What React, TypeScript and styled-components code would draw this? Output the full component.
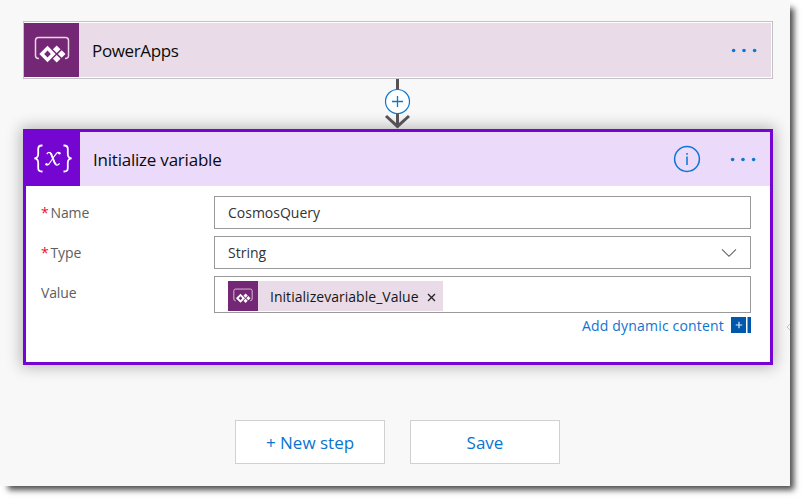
import React from "react";
import styled, { createGlobalStyle } from "styled-components";

const Global = createGlobalStyle`
  * { box-sizing: border-box; }
  body { margin: 0; background: #fff; font-family: "Open Sans", "Noto Sans", sans-serif; }
  button { font-family: inherit; padding: 0; }
`;

const Page = styled.div`
  width: 805px;
  height: 501px;
  overflow: hidden;
  background: #fff;
`;

const Canvas = styled.main`
  position: relative;
  width: 790px;
  height: 486px;
  padding: 21px 17px 0 23px;
  background: #f8f8f8;
  box-shadow: 6px 6px 6px -2px rgba(0, 0, 0, 0.7);
`;

const EdgeMark = styled.svg`
  position: absolute;
  right: 0;
  top: 323px;
`;

const TriggerCard = styled.section`
  width: 750px;
  height: 58px;
  padding: 1px;
  border: 1px solid #c3c2c3;
  background: #fff;
  display: flex;
  > :first-child { margin: 0 0 0 -1px; }
`;

const IconTile = styled.div<{ $color: string; $size: number }>`
  flex: none;
  width: ${(p) => p.$size}px;
  height: 100%;
  background: ${(p) => p.$color};
  display: flex;
  align-items: center;
  justify-content: center;
`;

const CardBar = styled.header<{ $color: string; $pad: number }>`
  flex: 1;
  height: 100%;
  padding: 0 ${(p) => p.$pad}px 0 13px;
  background: ${(p) => p.$color};
  display: flex;
  align-items: center;
`;

const Title = styled.h2<{ $spacing: number }>`
  margin: 0;
  padding-top: 2px;
  flex: 1;
  font-size: 17px;
  font-weight: 400;
  line-height: 24px;
  letter-spacing: ${(p) => p.$spacing}px;
  color: #0b0b0b;
  white-space: nowrap;
`;

const IconButton = styled.button`
  display: flex;
  border: 0;
  background: none;
`;

const Connector = styled.div`
  height: 50px;
  width: 748px;
  display: flex;
  justify-content: center;
  position: relative;
  z-index: 1;
`;

const ActionCard = styled.section`
  width: 750px;
  height: 236px;
  border: 3px solid #7506d2;
  background: #fff;
  box-shadow: 0 0 14px 2px rgba(0, 0, 0, 0.27);
`;

const ActionHead = styled.div`
  display: flex;
  height: 54px;
  > :nth-child(2) > :nth-child(2) { margin-right: 29px; }
`;

const Form = styled.div`
  padding: 10px 19px 0 15px;
  display: flex;
  flex-direction: column;
  gap: 7px;
`;

const Row = styled.div<{ $height: number }>`
  display: flex;
  height: ${(p) => p.$height}px;
`;

const Label = styled.label`
  width: 173px;
  font-size: 14px;
  line-height: 33px;
  letter-spacing: -0.15px;
  color: #605e5c;
`;

const Required = styled.span`
  color: #e8112d;
  margin-right: 2px;
`;

const Field = styled.div`
  flex: 1;
  border: 1px solid #999;
  padding: 0 13px;
  display: flex;
  align-items: center;
  justify-content: space-between;
  font-size: 14px;
  color: #333;
  letter-spacing: 0;
`;

const Token = styled.div`
  display: flex;
  align-items: center;
  height: 30px;
  width: 215px;
  margin-top: 2px;
  background: #e9dce8;
  color: #161616;
  white-space: nowrap;
`;

const TokenText = styled.span`
  margin-left: 12px;
  padding-top: 1px;
  width: 157px;
  letter-spacing: 0.03px;
`;

const Dynamic = styled.div`
  height: 20px;
  margin-top: -5px;
  display: flex;
  align-items: center;
  justify-content: flex-end;
  gap: 7px;
  color: #0f74cf;
  font-size: 14px;
  line-height: 20px;
`;

const DynamicText = styled.span`
  padding-top: 1px;
  letter-spacing: 0.18px;
`;

const Actions = styled.footer`
  display: flex;
  gap: 25px;
  margin: 55px 0 0 212px;
`;

const ActionButton = styled.button`
  width: 150px;
  height: 44px;
  border: 1px solid #d2d1d0;
  background: #fff;
  color: #0874d1;
  font-size: 17px;
  letter-spacing: 0;
`;

const PowerAppsIcon = ({ width, height }: { width: number; height: number }) => (
  <svg width={width} height={height} viewBox="0 0 36 28" fill="none">
    <path d="M5 22.5H4.5Q1.5 22.5 1.5 19.5V4.5Q1.5 1.5 4.5 1.5H31.5Q34.5 1.5 34.5 4.5V19.5Q34.5 22.5 31 22.5" stroke="#e9d7e8" strokeWidth="1.5" />
    <path fillRule="evenodd" fill="#fff" d="M13.5 9.8L21.7 18L13.5 26.2L5.3 18ZM13.5 14.4L10.2 18L13.5 21.6L16.8 18Z" />
    <path fill="#fff" d="M22.7 9.5L26.5 13.3L22.7 17.1L18.9 13.3ZM27.7 14.2L31.5 18L27.7 21.8L23.9 18ZM22.7 18.9L26.5 22.7L22.7 26.5L18.9 22.7Z" />
  </svg>
);

const VariableIcon = () => (
  <svg width="40" height="30" viewBox="0 0 40 30" fill="none" stroke="#fff" strokeWidth="1.8">
    <path d="M9.5 1.5H8.8Q5.2 1.5 5.2 5V10Q5.2 14 1.4 14.4Q5.2 14.8 5.2 18.8V24Q5.2 27.5 8.8 27.5H9.5M30.5 1.5H31.2Q34.8 1.5 34.8 5V10Q34.8 14 38.6 14.4Q34.8 14.8 34.8 18.8V24Q34.8 27.5 31.2 27.5H30.5" />
    <path strokeWidth="1.3" d="M13.8 10Q16.2 6.9 18 10.1L21.8 19.2Q23.6 22.9 26.6 19.3" />
    <path strokeWidth="1.9" d="M17 8.8Q18.4 9.4 19 12L21.3 18Q22 20.2 23.4 20.6" />
    <path strokeWidth="1.2" d="M19.5 15L16 20Q14.7 21.5 13.5 20.5M20 14L23.5 9.4Q25 7.7 27 9" />
    <circle cx="13.5" cy="20.3" r="1.2" fill="#fff" stroke="none" />
    <circle cx="26.4" cy="9.2" r="1.2" fill="#fff" stroke="none" />
  </svg>
);

const MoreButton = () => (
  <IconButton aria-label="More options">
    <svg width="26" height="6" fill="#0b76d5">
      <circle cx="2.6" cy="3.5" r="1.8" />
      <circle cx="13" cy="3.5" r="1.8" />
      <circle cx="23.6" cy="3.5" r="1.8" />
    </svg>
  </IconButton>
);

const InfoIcon = () => (
  <svg width="28" height="28" fill="none" stroke="#0b76d5" strokeWidth="1.5">
    <circle cx="14" cy="14" r="12.4" />
    <path d="M14 11.5V20M14 8.1V9.8" />
  </svg>
);

const ArrowIcon = () => (
  <svg width="28" height="50" fill="none">
    <path d="M14.5 0V48" stroke="#555257" strokeWidth="3" />
    <path d="M3 37L14.5 47.4L26 37" stroke="#555257" strokeWidth="3" />
    <circle cx="14.5" cy="22.5" r="12" fill="#fff" stroke="#0878d2" strokeWidth="1.2" />
    <path d="M9 22.5H20M14.5 17V28" stroke="#0878d2" strokeWidth="1.3" />
  </svg>
);

const ChevronIcon = () => (
  <svg width="16" height="10" fill="none">
    <path d="M1 1.3L8 8.3L15 1.3" stroke="#666" strokeWidth="1.1" />
  </svg>
);

const CloseIcon = () => (
  <svg width="9" height="12" fill="none">
    <path d="M1 4L8 11M8 4L1 11" stroke="#222" strokeWidth="1.3" />
  </svg>
);

const AddDynamicIcon = () => (
  <svg width="20" height="16">
    <path fill="#0058ad" d="M0 0H15V16H0ZM16.5 0H20V16H16.5Z" />
    <path d="M4.7 8H11.3M8 4.7V11.3" stroke="#d9e9f6" strokeWidth="1.2" />
  </svg>
);

export default function App() {
  return (
    <Page>
      <Global />
      <Canvas>
        <TriggerCard>
          <IconTile $color="#742774" $size={55}>
            <PowerAppsIcon width={36} height={28} />
          </IconTile>
          <CardBar $color="#e9dce8" $pad={14}>
            <Title $spacing={-0.35}>PowerApps</Title>
            <MoreButton />
          </CardBar>
        </TriggerCard>
        <Connector>
          <ArrowIcon />
        </Connector>
        <ActionCard>
          <ActionHead>
            <IconTile $color="#7506d2" $size={54}>
              <VariableIcon />
            </IconTile>
            <CardBar $color="#ebdafa" $pad={14}>
              <Title $spacing={-0.22}>Initialize variable</Title>
              <InfoIcon />
              <MoreButton />
            </CardBar>
          </ActionHead>
          <Form>
            <Row $height={33}>
              <Label><Required>*</Required>Name</Label>
              <Field>CosmosQuery</Field>
            </Row>
            <Row $height={33}>
              <Label><Required>*</Required>Type</Label>
              <Field>String<ChevronIcon /></Field>
            </Row>
            <Row $height={37}>
              <Label>Value</Label>
              <Field>
                <Token>
                  <IconTile $color="#742774" $size={30}>
                    <PowerAppsIcon width={20} height={16} />
                  </IconTile>
                  <TokenText>Initializevariable_Value</TokenText>
                  <CloseIcon />
                </Token>
              </Field>
            </Row>
            <Dynamic>
              <DynamicText>Add dynamic content</DynamicText>
              <AddDynamicIcon />
            </Dynamic>
          </Form>
        </ActionCard>
        <Actions>
          <ActionButton>+ New step</ActionButton>
          <ActionButton>Save</ActionButton>
        </Actions>
        <EdgeMark width="4" height="8" fill="none">
          <path d="M4 1L1 4L4 7" stroke="#c4c4c4" />
        </EdgeMark>
      </Canvas>
    </Page>
  );
}
